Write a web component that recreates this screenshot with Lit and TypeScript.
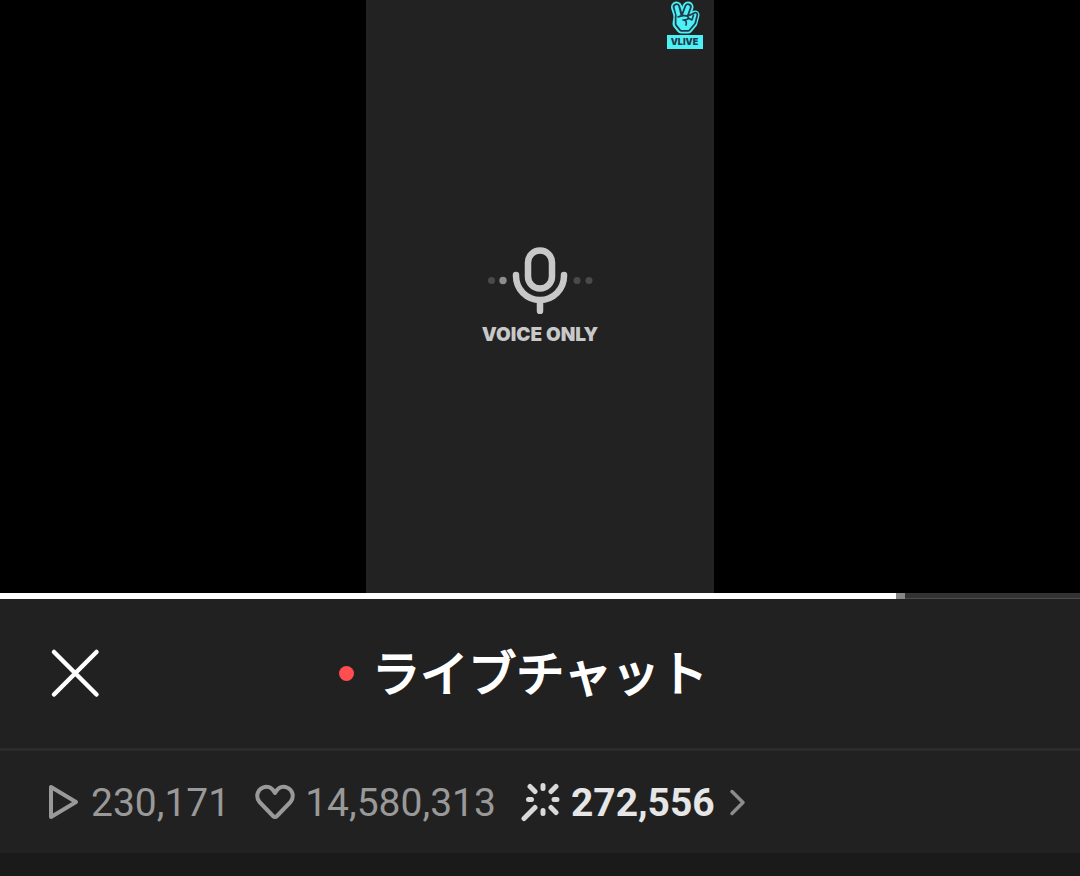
import { LitElement, html, css } from "lit";
import { customElement, property, state } from "lit/decorators.js";

@customElement("voice-stage")
class VoiceStage extends LitElement {
  static styles = css`
    :host { display: block; flex: none; background: #000; }
    .panel {
      position: relative; box-sizing: border-box; width: calc(100% * 348 / 1080); aspect-ratio: 348 / 593;
      margin: 0 auto; background: #222; display: flex; flex-direction: column;
      align-items: center; justify-content: center; gap: 8px;
    }
    .brand {
      position: absolute; top: 0; right: 11px; width: 37px;
      display: flex; flex-direction: column; align-items: center;
    }
    .brand svg { display: block; }
    .name {
      width: 36px; height: 14px; background: #4df0f5; color: #203c4c;
      font: 900 9px/14px Inter, sans-serif; text-align: center;
    }
    .mic { display: block; }
    .label { color: #c8c8c8; font: 900 19px/26px Inter, sans-serif; }
  `;
  render() {
    return html`
      <div class="panel">
        <div class="brand">
          <svg width="36" height="35" viewBox="0 0 36 35" fill="none" stroke-linecap="round" stroke-linejoin="round" aria-hidden="true">
            <g stroke="#4df0f5" fill="#4df0f5">
              <path stroke-width="11" d="M9.500 7 12 15M21 7 18 15"/>
              <path stroke-width="9" d="M11 17h12l5-2-2 8-5 6h-7l-4-5z"/>
            </g>
            <g stroke="#203c4c" fill="#203c4c">
              <path stroke-width="7.500" d="M9.500 7 12 15M21 7 18 15"/>
              <path stroke-width="5.500" d="M10.500 17h13l5-2.500-2 8-5.500 6.500h-6.500l-4-5z"/>
            </g>
            <g stroke="#4df0f5" fill="#4df0f5">
              <path stroke-width="3.800" d="M9.500 7 12 17M21 7 18 15"/>
              <path stroke-width="2" d="M10.500 17h13l5-2.500-2 8-5.500 6.500h-6.500l-4-5z"/>
            </g>
            <path d="M11 17c3-1.500 8-2 10-.500 1.500 2-.500 3.500-5 3.500M16 20c3 0 4 2 3 5M21 18l4 2 1.500-5" stroke="#203c4c" stroke-width="1.600"/>
          </svg>
          <div class="name">VLIVE</div>
        </div>
        <svg class="mic" width="108" height="68" viewBox="0 0 108 68" fill="none" aria-hidden="true">
          <rect x="42" y="4.500" width="24" height="38" rx="12" stroke="#c8c8c8" stroke-width="6.500"/>
          <path d="M30 29v1a24 24 0 0 0 48 0v-1M54 55v10" stroke="#c8c8c8" stroke-width="6.500" stroke-linecap="round"/>
          <circle cx="5.500" cy="34.500" r="3.500" fill="#4a4a4a"/>
          <circle cx="17" cy="34.500" r="3.700" fill="#8d8d8d"/>
          <circle cx="91" cy="34.500" r="3.500" fill="#4a4a4a"/>
          <circle cx="103" cy="34.500" r="3.500" fill="#4a4a4a"/>
        </svg>
        <div class="label">VOICE ONLY</div>
      </div>
    `;
  }
}

@customElement("seek-bar")
class SeekBar extends LitElement {
  @property({ type: Number }) played = 0;
  @property({ type: Number }) buffered = 0;
  static styles = css`
    :host { display: block; }
    .seek {
      appearance: none; display: block; width: 100%; height: 6px; margin: 0; border-radius: 0;
      background: linear-gradient(to right, #fff var(--played), #888 var(--played), #888 var(--buffered), transparent var(--buffered)),
        linear-gradient(#333 5px, #4c4c4c 5px);
    }
    .seek::-webkit-slider-thumb { appearance: none; width: 0; height: 6px; }
  `;
  render() {
    return html`<input class="seek" type="range" min="0" max="100" step="0.01" aria-label="再生位置"
      .value=${String(this.played)}
      @input=${(e: Event) => { this.played = Number((e.target as HTMLInputElement).value); }}
      style="--played:${this.played}%;--buffered:${Math.max(this.buffered, this.played)}%">`;
  }
}

@customElement("app-root")
class AppRoot extends LitElement {
  @state() private plays = 230171;
  @state() private likes = 14580313;
  @state() private lights = 272556;

  static styles = css`
    :host {
      display: flex; flex-direction: column; min-height: 100vh; background: #1a1a1a;
      font-family: Roboto, "Noto Sans CJK JP", sans-serif;
    }
    svg { display: block; flex: none; }
    .head {
      display: grid; grid-template-columns: 1fr auto 1fr; align-items: center;
      height: 149px; padding: 0 48px; background: #212121; border-bottom: 3px solid #2b2b2b;
    }
    button { border: 0; padding: 0; background: none; color: inherit; font: inherit; cursor: pointer; }
    .close { color: #fff; justify-self: start; }
    .live { width: 15px; height: 15px; border-radius: 50%; background: #ff4d50; }
    .lead { display: flex; align-items: center; justify-content: space-between; padding-right: 18px; }
    .title {
      margin: 0; padding-bottom: 8px; color: #fff; font: 400 48px/72px "Noto Sans CJK JP", sans-serif;
      -webkit-text-stroke: 2px #fff;
    }
    .stats {
      display: flex; align-items: center; height: 102px; padding: 0 48px; background: #212121;
      color: #999; font-size: 39px; line-height: 48px; gap: 25px;
    }
    .stat { display: flex; align-items: center; gap: 10px; }
    .count { padding-top: 2px; }
    .strong { color: #e6e6e6; font-weight: 700; }
  `;

  render() {
    return html`
      <voice-stage></voice-stage>
      <seek-bar .played=${82.96} .buffered=${83.8}></seek-bar>
      <header class="head">
        <div class="lead">
          <button class="close" aria-label="閉じる">
            <svg width="54" height="54" viewBox="0 0 54 54" fill="none" stroke="currentColor" stroke-width="4.500" stroke-linecap="round">
              <path d="M6 5 48.500 47.500M48.500 5 6 47.500"/>
            </svg>
          </button>
          <span class="live"></span>
        </div>
        <h1 class="title">ライブチャット</h1>
      </header>
      <section class="stats">
        <div class="stat">
          <svg width="33" height="36" viewBox="0 0 33 36" fill="none" stroke="#999" stroke-width="4" stroke-linejoin="round" aria-hidden="true">
            <path d="M3 3v30L28 18z"/>
          </svg>
          <span class="count">${this.plays.toLocaleString("en-US")}</span>
        </div>
        <div class="stat">
          <svg width="40" height="36" viewBox="0 0 40 36" fill="none" stroke="#999" stroke-width="4" stroke-linejoin="round" aria-hidden="true">
            <path d="M20 9C16.500 2.500 11.500 2 8 3.500 2 6 .500 13 4.500 18L18 32q2 2 4 0L35.500 18C39.500 13 38 6 32 3.500 28.500 2 23.500 2.500 20 9z"/>
          </svg>
          <span class="count">${this.likes.toLocaleString("en-US")}</span>
        </div>
        <button class="stat strong">
          <svg width="40" height="40" viewBox="0 0 40 40" fill="none" stroke="#d9d9d9" stroke-width="5" stroke-linecap="round" aria-hidden="true">
            <path d="M22 3.500v3M22 28.500v3M7.500 17.500h3M33 17.500h3M9 4.500l5 5M35 4.500l-5 5M30 25.500l5 5M14 25.500 3 36.500"/>
          </svg>
          <span class="count">${this.lights.toLocaleString("en-US")}</span>
          <svg width="24" height="30" viewBox="0 0 24 30" fill="none" stroke="#8c8c8c" stroke-width="3.500" stroke-linecap="round" stroke-linejoin="round" aria-hidden="true">
            <path d="M7 4.500 18 15.500 7 26.500"/>
          </svg>
        </button>
      </section>
    `;
  }
}
